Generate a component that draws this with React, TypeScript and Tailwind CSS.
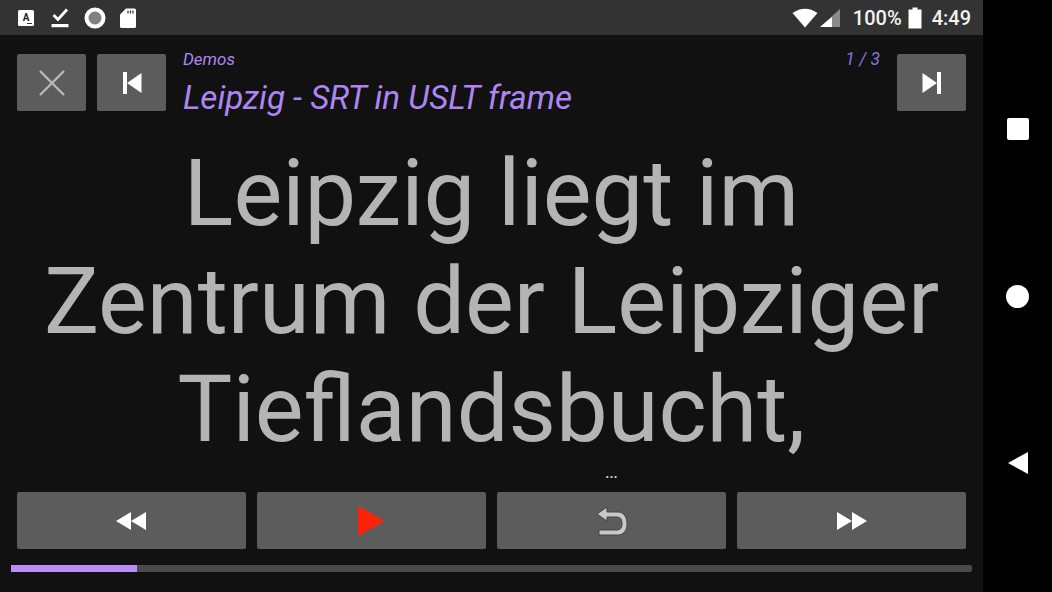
const Btn = ({ className = "", children }: { className?: string; children: React.ReactNode }) => (
  <div className={`h-[57px] bg-[#5c5c5c] rounded-[2px] flex items-center justify-center ${className}`}>{children}</div>
);

export default function App() {
  return (
    <div className="w-[1052px] h-[592px] bg-black flex overflow-hidden font-['Roboto',sans-serif]">
      <div className="w-[983px] h-full flex flex-col bg-[#111112]">
        {/* status bar */}
        <div className="h-[35px] bg-[#333333] flex items-center pl-[17px] pr-[12px] text-white shrink-0">
          <svg width="18" height="18" viewBox="0 0 18 18">
            <rect x="1" y="1" width="16" height="16" rx="1.5" fill="#fff" />
            <text x="9" y="12" textAnchor="middle" fontSize="10" fontWeight="700" fill="#222" fontFamily="Roboto">A</text>
            <rect x="10" y="14" width="5" height="1" fill="#333" />
          </svg>
          <svg width="18" height="22" viewBox="0 0 18 22" className="ml-[16px]">
            <path d="M2.5 8 L7 12.5 L16 2.5" stroke="#fff" strokeWidth="2.8" fill="none" />
            <rect x="0.5" y="17" width="17" height="3.2" fill="#fff" />
          </svg>
          <svg width="22" height="22" viewBox="0 0 22 22" className="ml-[15px]">
            <circle cx="11" cy="11" r="8.5" fill="#808080" stroke="#fff" strokeWidth="4" />
          </svg>
          <svg width="18" height="22" viewBox="0 0 18 22" className="ml-[13px]">
            <path d="M7 1.5 H15.5 A1.5 1.5 0 0 1 17 3 V19.5 A1.5 1.5 0 0 1 15.5 21 H2.5 A1.5 1.5 0 0 1 1 19.5 V7.5 Z" fill="#fff" />
            <path d="M9 3.5 V6.5 M11.5 3.5 V6.5 M14 3.5 V6.5" stroke="#333" strokeWidth="1.2" />
          </svg>
          <div className="ml-auto flex items-center">
            <svg width="26" height="20" viewBox="0 0 26 20">
              <path d="M0.5 5 Q13 -3.5 25.5 5 L13 19.5 Z" fill="#fff" />
            </svg>
            <svg width="20" height="20" viewBox="0 0 20 20" className="ml-[2px]">
              <path d="M20 1 V19 H0 Z" fill="#8a8a8a" />
              <path d="M12 9 V19 H0 Z" fill="#fff" />
            </svg>
            <span className="ml-[13px] text-[20px] leading-none font-medium text-[#f2f2f2]">100%</span>
            <svg width="14" height="22" viewBox="0 0 14 22" className="ml-[6px]">
              <path d="M4.5 0.5 H9.5 V2.5 H13.5 V21.5 H0.5 V2.5 H4.5 Z" fill="#fff" />
            </svg>
            <span className="ml-[10px] text-[20px] leading-none font-medium text-[#f2f2f2]">4:49</span>
          </div>
        </div>

        {/* header row */}
        <div className="mt-[19px] h-[57px] pl-[17px] pr-[17px] flex gap-[11px] shrink-0">
          <Btn className="w-[69px]">
            <svg width="28" height="28" viewBox="0 0 28 28">
              <path d="M2 2 L26 26 M26 2 L2 26" stroke="#b8b8b8" strokeWidth="2.4" />
            </svg>
          </Btn>
          <Btn className="w-[69px]">
            <svg width="20" height="24" viewBox="0 0 20 24">
              <rect x="1" y="1" width="4" height="22" fill="#fff" />
              <path d="M19.5 2 V22 L5 12 Z" fill="#fff" />
            </svg>
          </Btn>
          <div className="flex-1 relative text-[#ae86f2] italic pl-[6px]">
            <div className="text-[17px] leading-[19px] mt-[-4px]">Demos</div>
            <div className="text-[33.2px] leading-[38px] mt-[10px] whitespace-nowrap">Leipzig - SRT in USLT frame</div>
            <div className="absolute right-[6px] top-[-4px] text-[17.5px] leading-[19px] text-[#8a70dc]">1 / 3</div>
          </div>
          <Btn className="w-[69px]">
            <svg width="20" height="24" viewBox="0 0 20 24">
              <path d="M0.5 2 V22 L15 12 Z" fill="#fff" />
              <rect x="15" y="1" width="4" height="22" fill="#fff" />
            </svg>
          </Btn>
        </div>

        {/* lyrics */}
        <div className="mt-[29px] h-[324px] shrink-0 text-center text-[#b4b4b4] text-[92px] leading-[108px] whitespace-nowrap">
          <div>Leipzig liegt im</div>
          <div>Zentrum der Leipziger</div>
          <div>Tieflandsbucht,</div>
        </div>

        <div className="h-[28px] ml-[497px] w-[229px] text-center text-[#d8d8d8] text-[15px] font-medium leading-[18px] shrink-0">...</div>

        {/* transport */}
        <div className="pl-[17px] pr-[17px] grid grid-cols-4 gap-[11px] shrink-0">
          <Btn>
            <svg width="32" height="20" viewBox="0 0 32 20" className="mr-[1px]">
              <path d="M16 1 V19 L1 10 Z M31 1 V19 L16 10 Z" fill="#fff" />
            </svg>
          </Btn>
          <Btn>
            <svg width="30" height="32" viewBox="0 0 30 32" className="mr-[1px]">
              <path d="M2 1 L29 16 L2 31 Z" fill="#fb2408" />
            </svg>
          </Btn>
          <Btn>
            <svg width="34" height="30" viewBox="0 0 34 30">
              <path d="M12 1 L2 8 L12 15 V11 H22 C26 11 27 14 27 18 C27 22 25 24 22 24 H4 V29 H23 C28 29 32 25 32 18 C32 10 28 6 23 6 H12 Z" fill="#c8c8c8" stroke="#444" strokeWidth="1" />
            </svg>
          </Btn>
          <Btn>
            <svg width="32" height="20" viewBox="0 0 32 20">
              <path d="M1 1 V19 L16 10 Z M16 1 V19 L31 10 Z" fill="#fff" />
            </svg>
          </Btn>
        </div>

        {/* progress */}
        <div className="mt-[16px] ml-[11px] w-[961px] h-[7px] bg-[#4a4a4a] rounded-r-[2px] shrink-0">
          <div className="h-full w-[126px] bg-[#b68ef5]" />
        </div>
      </div>

      {/* nav bar */}
      <div className="flex-1 h-full flex flex-col items-center">
        <div className="mt-[118px] w-[22px] h-[22px] bg-white rounded-[2px] shrink-0" />
        <div className="mt-[145px] w-[23px] h-[23px] bg-white rounded-full shrink-0" />
        <svg width="22" height="24" viewBox="0 0 22 24" className="mt-[143px] shrink-0">
          <path d="M21 1 V23 L1 12 Z" fill="#fff" />
        </svg>
      </div>
    </div>
  );
}
